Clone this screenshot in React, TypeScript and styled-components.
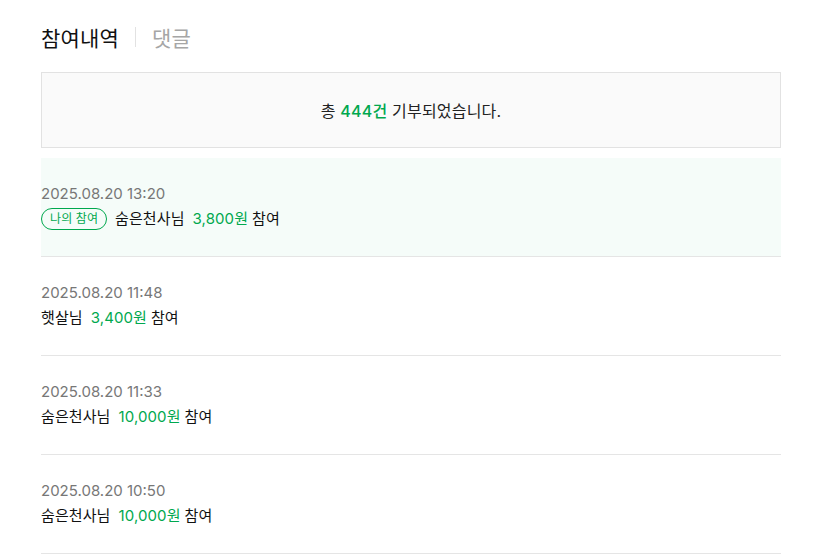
import styled, { createGlobalStyle } from 'styled-components';

const GlobalStyle = createGlobalStyle`
  body {
    margin: 0;
    background: #ffffff;
    font-family: Inter, "Noto Sans CJK KR", sans-serif;
    font-weight: 400;
    color: #222222;
  }
`;

const Page = styled.div`
  padding: 18px 33px 0 41px;
`;

const Tabs = styled.div`
  display: flex;
  align-items: center;
  height: 38px;
  margin-bottom: 16px;
`;

const Tab = styled.div<{ $active?: boolean }>`
  font-size: 21px;
  font-weight: 400;
  letter-spacing: 0.2px;
  color: ${(p) => (p.$active ? '#111111' : '#a6a6a6')};
`;

const TabDivider = styled.span`
  width: 1px;
  height: 20px;
  background: #e2e2e2;
  margin: 0 16px;
`;

const Summary = styled.div`
  height: 74px;
  border: 1px solid #e2e2e2;
  background: #fafafa;
  display: flex;
  align-items: center;
  justify-content: center;
  font-size: 16px;
  letter-spacing: 0.2px;
  color: #222222;
  margin-bottom: 10px;
`;

const Green = styled.span`
  color: #00a84e;
  font-weight: 500;
`;

const List = styled.ul`
  list-style: none;
  margin: 0;
  padding: 0;
`;

const Item = styled.li<{ $mine?: boolean }>`
  padding: 25px 0 26px;
  border-bottom: 1px solid #e5e5e5;
  background: ${(p) => (p.$mine ? '#f5fcf9' : 'transparent')};
  display: flex;
  flex-direction: column;
  gap: 3px;
`;

const DateText = styled.div`
  font-size: 15px;
  line-height: 22px;
  color: #777777;
`;

const Line = styled.div`
  display: flex;
  align-items: center;
  font-size: 15px;
  line-height: 22px;
  letter-spacing: 0.1px;
  color: #111111;
`;

const Badge = styled.span`
  display: inline-flex;
  align-items: center;
  height: 20px;
  padding: 0 8px;
  margin-right: 8px;
  border: 1px solid #00a84e;
  border-radius: 11px;
  font-size: 12px;
  color: #00a84e;
`;

const Name = styled.span`
  margin-right: 8px;
`;

const Amount = styled.span`
  color: #00a84e;
  margin-right: 4px;
`;

const entries = [
  { date: '2025.08.20 13:20', name: '숨은천사님', amount: '3,800원', mine: true },
  { date: '2025.08.20 11:48', name: '햇살님', amount: '3,400원' },
  { date: '2025.08.20 11:33', name: '숨은천사님', amount: '10,000원' },
  { date: '2025.08.20 10:50', name: '숨은천사님', amount: '10,000원' },
];

export default function App() {
  return (
    <>
      <GlobalStyle />
      <Page>
        <Tabs>
          <Tab $active>참여내역</Tab>
          <TabDivider />
          <Tab>댓글</Tab>
        </Tabs>
        <Summary>
          총&nbsp;<Green>444건</Green>&nbsp;기부되었습니다.
        </Summary>
        <List>
          {entries.map((e, i) => (
            <Item key={i} $mine={e.mine}>
              <DateText>{e.date}</DateText>
              <Line>
                {e.mine && <Badge>나의 참여</Badge>}
                <Name>{e.name}</Name>
                <Amount>{e.amount}</Amount>
                참여
              </Line>
            </Item>
          ))}
        </List>
      </Page>
    </>
  );
}
